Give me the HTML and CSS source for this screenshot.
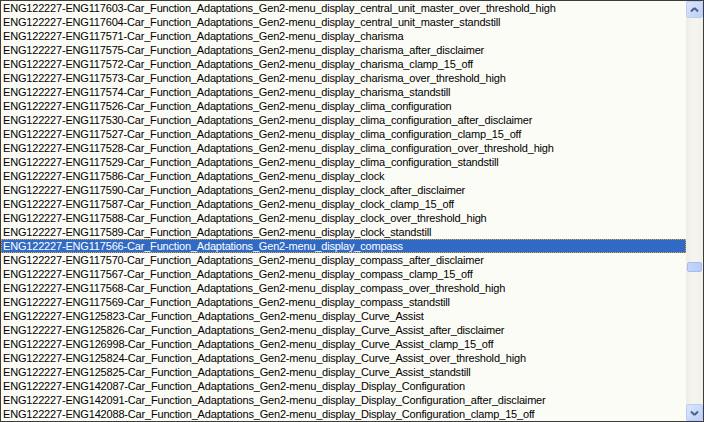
FILE: index.html
```html
<!DOCTYPE html>
<html>
<head>
<meta charset="utf-8">
<link rel="stylesheet" href="styles.css">
</head>
<body>
<div class="listbox">
  <ul class="items">
    <li>ENG122227-ENG117603-Car_Function_Adaptations_Gen2-menu_display_central_unit_master_over_threshold_high</li>
    <li>ENG122227-ENG117604-Car_Function_Adaptations_Gen2-menu_display_central_unit_master_standstill</li>
    <li>ENG122227-ENG117571-Car_Function_Adaptations_Gen2-menu_display_charisma</li>
    <li>ENG122227-ENG117575-Car_Function_Adaptations_Gen2-menu_display_charisma_after_disclaimer</li>
    <li>ENG122227-ENG117572-Car_Function_Adaptations_Gen2-menu_display_charisma_clamp_15_off</li>
    <li>ENG122227-ENG117573-Car_Function_Adaptations_Gen2-menu_display_charisma_over_threshold_high</li>
    <li>ENG122227-ENG117574-Car_Function_Adaptations_Gen2-menu_display_charisma_standstill</li>
    <li>ENG122227-ENG117526-Car_Function_Adaptations_Gen2-menu_display_clima_configuration</li>
    <li>ENG122227-ENG117530-Car_Function_Adaptations_Gen2-menu_display_clima_configuration_after_disclaimer</li>
    <li>ENG122227-ENG117527-Car_Function_Adaptations_Gen2-menu_display_clima_configuration_clamp_15_off</li>
    <li>ENG122227-ENG117528-Car_Function_Adaptations_Gen2-menu_display_clima_configuration_over_threshold_high</li>
    <li>ENG122227-ENG117529-Car_Function_Adaptations_Gen2-menu_display_clima_configuration_standstill</li>
    <li>ENG122227-ENG117586-Car_Function_Adaptations_Gen2-menu_display_clock</li>
    <li>ENG122227-ENG117590-Car_Function_Adaptations_Gen2-menu_display_clock_after_disclaimer</li>
    <li>ENG122227-ENG117587-Car_Function_Adaptations_Gen2-menu_display_clock_clamp_15_off</li>
    <li>ENG122227-ENG117588-Car_Function_Adaptations_Gen2-menu_display_clock_over_threshold_high</li>
    <li>ENG122227-ENG117589-Car_Function_Adaptations_Gen2-menu_display_clock_standstill</li>
    <li class="selected">ENG122227-ENG117566-Car_Function_Adaptations_Gen2-menu_display_compass</li>
    <li>ENG122227-ENG117570-Car_Function_Adaptations_Gen2-menu_display_compass_after_disclaimer</li>
    <li>ENG122227-ENG117567-Car_Function_Adaptations_Gen2-menu_display_compass_clamp_15_off</li>
    <li>ENG122227-ENG117568-Car_Function_Adaptations_Gen2-menu_display_compass_over_threshold_high</li>
    <li>ENG122227-ENG117569-Car_Function_Adaptations_Gen2-menu_display_compass_standstill</li>
    <li>ENG122227-ENG125823-Car_Function_Adaptations_Gen2-menu_display_Curve_Assist</li>
    <li>ENG122227-ENG125826-Car_Function_Adaptations_Gen2-menu_display_Curve_Assist_after_disclaimer</li>
    <li>ENG122227-ENG126998-Car_Function_Adaptations_Gen2-menu_display_Curve_Assist_clamp_15_off</li>
    <li>ENG122227-ENG125824-Car_Function_Adaptations_Gen2-menu_display_Curve_Assist_over_threshold_high</li>
    <li>ENG122227-ENG125825-Car_Function_Adaptations_Gen2-menu_display_Curve_Assist_standstill</li>
    <li>ENG122227-ENG142087-Car_Function_Adaptations_Gen2-menu_display_Display_Configuration</li>
    <li>ENG122227-ENG142091-Car_Function_Adaptations_Gen2-menu_display_Display_Configuration_after_disclaimer</li>
    <li>ENG122227-ENG142088-Car_Function_Adaptations_Gen2-menu_display_Display_Configuration_clamp_15_off</li>
  </ul>
  <div class="scrollbar">
    <div class="sb-btn">
      <svg width="9" height="6" viewBox="0 0 9 6"><path d="M4.5 1 L8 4.5 M4.5 1 L1 4.5" stroke="#4d6185" stroke-width="2" fill="none"/></svg>
    </div>
    <div class="sb-track"><div class="sb-thumb"></div></div>
    <div class="sb-btn">
      <svg width="9" height="6" viewBox="0 0 9 6"><path d="M4.5 5 L8 1.5 M4.5 5 L1 1.5" stroke="#4d6185" stroke-width="2" fill="none"/></svg>
    </div>
  </div>
</div>
</body>
</html>
```
FILE: styles.css
```css
html, body {
  margin: 0;
  padding: 0;
  background: #fbfcf6;
}
.listbox {
  box-sizing: border-box;
  width: 704px;
  height: 422px;
  border: 1px solid #3c3c3c;
  background: #fcfcf6;
  display: flex;
  overflow: hidden;
}
.items {
  flex: 1;
  list-style: none;
  margin: 0;
  padding: 0;
  overflow: hidden;
  font-family: "Liberation Sans", Arial, sans-serif;
  font-size: 11px;
  letter-spacing: -0.18px;
  color: #000;
}
.items li {
  height: 14px;
  line-height: 14px;
  padding-left: 2px;
  white-space: nowrap;
  box-sizing: border-box;
}
.items li.selected {
  background: #316ac5;
  color: #fff;
  outline: 1px dotted #e0a040;
  outline-offset: -1px;
}
.scrollbar {
  width: 17px;
  display: flex;
  flex-direction: column;
  background: linear-gradient(to right, #eeede5, #f5f4ef 40%, #f3f1ea);
}
.sb-btn {
  box-sizing: border-box;
  width: 17px;
  height: 17px;
  border: 1px solid #b8cdf5;
  border-radius: 2px;
  background: linear-gradient(135deg, #dbe6fd, #bccffa);
  display: flex;
  align-items: center;
  justify-content: center;
}
.sb-track {
  flex: 1;
  padding-top: 244px;
}
.sb-thumb {
  box-sizing: border-box;
  margin: 0 1px;
  height: 10px;
  border: 1px solid #a4bdf0;
  border-radius: 2px;
  background: linear-gradient(to right, #c6d6fb, #b8cbf8);
}
```
